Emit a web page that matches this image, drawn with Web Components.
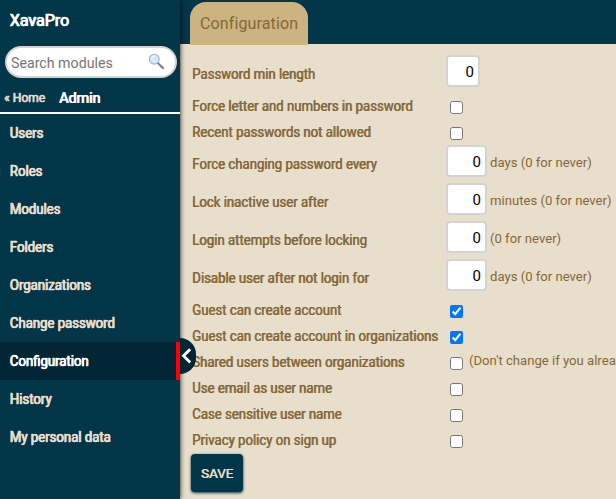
<!DOCTYPE html>
<html lang="en">
<head>
<meta charset="utf-8">
<title>XavaPro</title>
<style>
html,body{margin:0;height:100%;overflow:hidden}
body{font-family:Roboto,"Liberation Sans",sans-serif;background:#e8decc;color:#846839}
</style>
</head>
<body>
<xava-app></xava-app>
<script>
const define = (name, html, setup) => customElements.define(name, class extends HTMLElement {
  connectedCallback() {
    if (this.shadowRoot) return;
    const root = this.attachShadow({mode: 'open'});
    const t = document.createElement('template');
    t.innerHTML = html;
    root.append(t.content.cloneNode(true));
    if (setup) setup(this, root);
  }
});

define('nav-item', `<style>
:host{display:flex;align-items:center;height:38px;padding:2px 0 0 9.6px;box-sizing:border-box;font-size:13.15px;line-height:20px;color:#e8decc;-webkit-text-stroke:.25px currentColor;text-shadow:.7px 0 0 currentColor,.35px 0 0 currentColor;white-space:nowrap}
:host([active]){background:#022635;color:#fff;border-right:4px solid #f00}
span{transform:scaleY(1.06)}
</style><span><slot></slot></span>`);

define('search-box', `<style>
:host{display:flex;align-items:center;justify-content:space-between;box-sizing:border-box;width:172px;height:32px;border:2px solid #d3d3d3;border-radius:16px;background:#fff;padding:0 10px 0 4px;color:#757575;font-size:14.2px}
span{margin-top:1px;transform:scaleY(1.06)}
svg{display:block;margin-bottom:2px}
</style><span>Search modules</span>
<svg width="17" height="17" viewBox="0 0 17 17"><path d="M10 10l5 5" stroke="#777" stroke-width="2.2" stroke-linecap="round"/><path d="M10.3 9.5l5 5" stroke="#bbb" stroke-width=".6"/><circle cx="6.3" cy="6.2" r="4.9" fill="#d5e8f8" stroke="#a3b3c3" stroke-width="1.1"/><path d="M3.6 5.5q.7-2.1 2.9-2.3" fill="none" stroke="#fff" stroke-width="1"/></svg>`);

define('side-bar', `<style>
:host{display:block;position:relative;z-index:1;width:180px;height:499px;flex:none;background:#033649;box-shadow:0 0 5px rgba(0,0,0,.9)}
h1{margin:0;padding:10px 0 0 9.5px;font-size:16px;font-weight:400;line-height:22px;color:#fff;-webkit-text-stroke:.3px #fff;text-shadow:.8px 0 0 #fff,.4px 0 0 #fff}
search-box{margin:14px 0 0 5px}
.crumbs{display:flex;align-items:center;height:34px;margin-top:2px;border-bottom:2px solid #fff;gap:14px;padding-left:4px;box-sizing:border-box}
.home{font-size:12px;padding-top:3px;color:#e8decc;-webkit-text-stroke:.3px #e8decc;text-shadow:.6px 0 0 #e8decc}
.admin{font-size:14.3px;padding-top:3px;color:#fff;-webkit-text-stroke:.2px #fff;text-shadow:.8px 0 0 #fff,.4px 0 0 #fff}
.toggle{position:absolute;left:180px;top:338px;width:16px;height:36px;border-radius:0 18px 18px 0;background:#022635}
.toggle svg{display:block}
</style>
<h1>XavaPro</h1><search-box></search-box>
<div class="crumbs"><span class="home">« Home</span><span class="admin">Admin</span></div>
<nav><nav-item>Users</nav-item><nav-item>Roles</nav-item><nav-item>Modules</nav-item><nav-item>Folders</nav-item><nav-item>Organizations</nav-item><nav-item>Change password</nav-item><nav-item active>Configuration</nav-item><nav-item>History</nav-item><nav-item>My personal data</nav-item></nav>
<div class="toggle"><svg width="16" height="36" viewBox="0 0 16 36"><path d="M10.2 11.2L3.5 17.8l6.7 6.7" fill="none" stroke="#fff" stroke-width="2.8"/></svg></div>`);

define('config-field', `<style>
:host{display:flex;align-items:flex-start;height:26px;font-size:13.12px;line-height:20px;white-space:nowrap}
:host([value]){height:38px}
.label{width:255px;flex:none;padding-top:4px;font-size:13.16px;text-shadow:.6px 0 0 currentColor}
.label span{display:inline-block;transform:scaleY(1.06)}
:host([value]) .label{padding-top:10px}
.num{box-sizing:border-box;width:var(--w,41px);height:32px;border:2px solid #d3d3d3;border-radius:4px;background:#fff;color:#000;text-align:right;padding:5px 4px 0 0;font-size:15px;line-height:21px;margin-left:-1px;flex:none}
input{margin:8px 0 0 3px;width:13px;height:13px;flex:none}
.hint{padding-top:2px;margin-left:6px}
:host([value]) .hint{padding-top:8px;margin-left:3px}
</style><div class="label"><span></span></div><div class="num"></div><input type="checkbox"><span class="hint"><slot></slot></span>`, (host, root) => {
  root.querySelector('.label span').textContent = host.getAttribute('label');
  const num = root.querySelector('.num'), box = root.querySelector('input');
  if (host.hasAttribute('value')) { num.textContent = host.getAttribute('value'); box.remove(); }
  else { num.remove(); box.checked = host.hasAttribute('checked'); }
});

define('save-button', `<style>
:host{display:flex;align-items:center;justify-content:center;width:52px;height:38px;border-radius:4px;background:#033649;color:#e8decc;font-size:13.4px;text-shadow:.6px 0 0 #e8decc;box-shadow:0 1px 3px #033649}
</style><slot></slot>`);

define('config-page', `<style>
:host{display:block;flex:1;min-width:0;background:#e8decc}
header{height:44px;background:#033649;padding:2px 0 0 10px;box-sizing:border-box}
.tab{box-sizing:border-box;width:118px;height:43px;border-radius:16px 16px 0 0;background:#cdb380;padding:11px 0 0 10px;font-size:16px;line-height:22px;letter-spacing:.12px;color:#846839}
main{padding:11px 0 0 12px}
save-button{margin:1px 0 0 -1px}
</style>
<header><div class="tab"><span>Configuration</span></div></header>
<main>
<config-field label="Password min length" value="0" style="--w:34px"></config-field>
<config-field label="Force letter and numbers in password"></config-field>
<config-field label="Recent passwords not allowed"></config-field>
<config-field label="Force changing password every" value="0">days (0 for never)</config-field>
<config-field label="Lock inactive user after" value="0">minutes (0 for never)</config-field>
<config-field label="Login attempts before locking" value="0">(0 for never)</config-field>
<config-field label="Disable user after not login for" value="0">days (0 for never)</config-field>
<config-field label="Guest can create account" checked></config-field>
<config-field label="Guest can create account in organizations" checked></config-field>
<config-field label="Shared users between organizations">(Don't change if you alrea</config-field>
<config-field label="Use email as user name"></config-field>
<config-field label="Case sensitive user name"></config-field>
<config-field label="Privacy policy on sign up"></config-field>
<save-button>SAVE</save-button>
</main>`);

define('xava-app', `<style>:host{display:flex;width:616px;height:499px;overflow:hidden}</style><side-bar></side-bar><config-page></config-page>`);
</script>
</body>
</html>
